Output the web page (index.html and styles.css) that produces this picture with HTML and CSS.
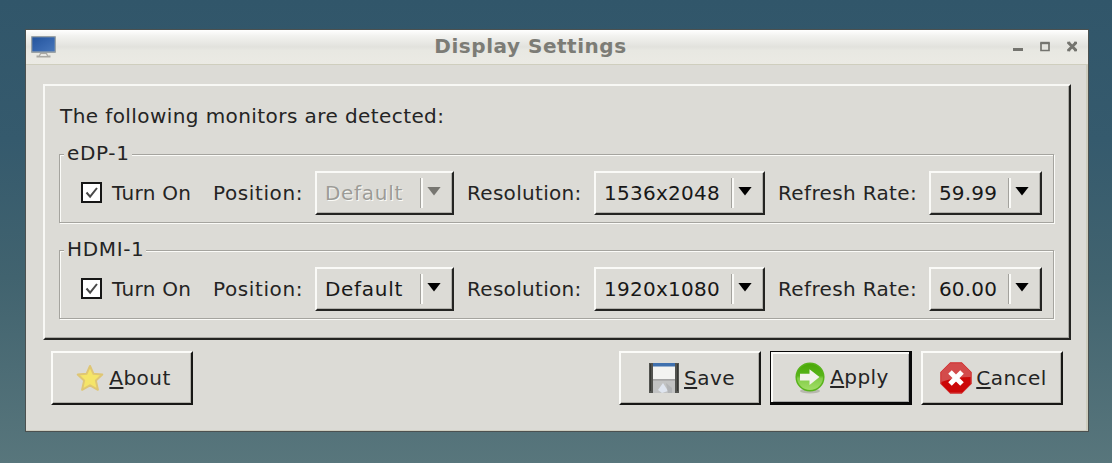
FILE: index.html
```html
<!DOCTYPE html>
<html lang="en">
<head>
<meta charset="utf-8">
<title>Display Settings</title>
<link rel="stylesheet" href="styles.css">
</head>
<body>
<main class="window">
  <header class="titlebar">
    <svg class="app-icon" width="27" height="24" viewBox="0 0 27 24">
      <defs><linearGradient id="screen" x1="0" y1="0" x2="1" y2="1"><stop offset="0" stop-color="#24549c"/><stop offset=".5" stop-color="#3565ad"/><stop offset="1" stop-color="#4776ba"/></linearGradient></defs>
      <rect x="1" y="1" width="25" height="17" rx="1" fill="#9ba3a6"/>
      <rect x="2.300" y="2.300" width="22.400" height="14.100" fill="url(#screen)"/>
      <path d="M10 18h7l1 2.500h2.500v2h-14v-2H9z" fill="#aaa9a4"/><path d="M11 19h5l1 2h-7z" fill="#e8e8e4"/>
    </svg>
    <h1 class="title">Display Settings</h1>
    <svg class="controls" width="68" height="14" viewBox="0 0 68 14" fill="none" stroke="#74746f">
      <path d="M1 9.500h10" stroke-width="3"/>
      <path d="M29 3v7.500h8V3" stroke-width="1.700"/><path d="M28.200 3h9.600" stroke-width="2.400"/>
      <path d="M56.200 2.500l8 8M64.200 2.500l-8 8" stroke-width="3"/><path d="M55.200 2.700h3M62 2.700h3M55.200 10.300h3M62 10.300h3" stroke-width="1.800"/>
    </svg>
  </header>
  <section class="panel">
    <p class="intro">The following monitors are detected:</p>
    <div class="monitor">
      <span class="legend">eDP-1</span>
      <span class="check"><svg width="17" height="17" viewBox="0 0 17 17"><path d="M3.500 8.500l3.600 4.200L14 4" fill="none" stroke="#484848" stroke-width="2"/></svg></span>
      <span class="label turn">Turn On</span>
      <span class="label position">Position:</span>
      <span class="combo combo-pos disabled"><span class="value">Default</span><i class="sep"></i><i class="arrow"></i></span>
      <span class="label resolution">Resolution:</span>
      <span class="combo combo-res"><span class="value">1536x2048</span><i class="sep"></i><i class="arrow"></i></span>
      <span class="label refresh">Refresh Rate:</span>
      <span class="combo combo-rate"><span class="value">59.99</span><i class="sep"></i><i class="arrow"></i></span>
    </div>
    <div class="monitor">
      <span class="legend">HDMI-1</span>
      <span class="check"><svg width="17" height="17" viewBox="0 0 17 17"><path d="M3.500 8.500l3.600 4.200L14 4" fill="none" stroke="#484848" stroke-width="2"/></svg></span>
      <span class="label turn">Turn On</span>
      <span class="label position">Position:</span>
      <span class="combo combo-pos"><span class="value">Default</span><i class="sep"></i><i class="arrow"></i></span>
      <span class="label resolution">Resolution:</span>
      <span class="combo combo-res"><span class="value">1920x1080</span><i class="sep"></i><i class="arrow"></i></span>
      <span class="label refresh">Refresh Rate:</span>
      <span class="combo combo-rate"><span class="value">60.00</span><i class="sep"></i><i class="arrow"></i></span>
    </div>
  </section>
  <footer class="actions">
    <div class="button about">
      <svg width="28" height="28" viewBox="0 0 28 28"><path d="M14 2l3.500 7.800 8.800.8-6.400 6 2 9.200L14 21.300l-7.900 4.500 2-9.200-6.400-6 8.800-.8z" fill="#f5e568" stroke="#dfc674" stroke-width="2" stroke-linejoin="round"/></svg>
      <span><u>A</u>bout</span>
    </div>
    <div class="button save">
      <svg width="32" height="32" viewBox="0 0 32 32">
        <path d="M1 1h30v30h-4l-1-1H6l-1 1H1z" fill="#52534f"/><path d="M2.500 2v27M29.500 2v27" stroke="#363733"/>
        <path d="M5 1h22v4H5z" fill="#3f70ae"/><path d="M5 4.500h22v13H5z" fill="#f3f3f1"/>
        <path d="M5 17.500h22V31H5z" fill="#c2c3c3"/><path d="M5 18h22" stroke="#999"/>
        <path d="M15 21l5 8-6 2-4-3z" fill="#dfe5ef"/><path d="M18 21l6 5v5h-4z" fill="#b2b4b6"/>
      </svg>
      <span><u>S</u>ave</span>
    </div>
    <div class="button apply">
      <svg width="32" height="34" viewBox="0 0 32 34">
        <defs><linearGradient id="green" x2="0" y2="1"><stop offset="0" stop-color="#4aa706"/><stop offset=".45" stop-color="#58b51a"/><stop offset=".55" stop-color="#83cc48"/><stop offset="1" stop-color="#a4df68"/></linearGradient></defs>
        <ellipse cx="16" cy="31" rx="10" ry="2.500" fill="#b7b8ae"/>
        <circle cx="16" cy="17" r="13.800" fill="url(#green)" stroke="#58b31b" stroke-width="1.500"/>
        <path d="M6 13.800h9.500V9.300L25.500 17l-10 8v-4.600H6z" fill="#f2f2ec"/>
      </svg>
      <span><u>A</u>pply</span>
    </div>
    <div class="button cancel">
      <svg width="32" height="32" viewBox="0 0 32 32">
        <path d="M10 .5h12l9.500 9.500v12L22 31.500H10L.5 22V10z" fill="#cc0808"/>
        <path d="M10 1h12l9 9v5Q16 15 1 20V10z" fill="#d34b4b"/>
        <path d="M10 1h12l9 9v12l-9 9H10l-9-9V10z" fill="none" stroke="#d23b3b"/>
        <path d="M10 10l12 12M22 10L10 22" stroke="#fff" stroke-width="5"/>
      </svg>
      <span><u>C</u>ancel</span>
    </div>
  </footer>
</main>
</body>
</html>
```
FILE: styles.css
```css
* { box-sizing: border-box; }
body {
  margin: 0;
  height: 463px;
  padding: 29px 23px 30px 25px;
  overflow: hidden;
  background: linear-gradient(#31566a, #355a6d 30%, #41636f 60%, #58767c);
  color: #242424;
  font: 20px/24px "DejaVu Sans", sans-serif;
}
.window {
  width: 1064px;
  height: 403px;
  border: 1px solid #4b5150;
  background: #dcdbd6;
  box-shadow: inset -2px -1px #cecdbf;
}
.titlebar {
  display: flex;
  align-items: center;
  height: 35px;
  padding: 0 8px 0 4px;
  background: linear-gradient(#fff, #f2f2ef 18%, #e2e2dd 50%, #e8e8e2 60%, #ebeae4);
  border-bottom: 1px solid #cfcebe;
}
.title {
  flex: 1;
  margin: 0;
  padding: 0 8px 3px 0;
  color: #7c7c76;
  font-size: 20px;
  line-height: 24px;
  letter-spacing: .53px;
  text-align: center;
}
.panel {
  width: 1028px;
  height: 256px;
  margin: 19px 0 0 17px;
  padding: 18px 15px 0 14px;
  border: 2px solid;
  border-color: #f8f8f5 #242422 #242422 #f8f8f5;
  box-shadow: inset -1px -1px #aaa9a4;
}
.intro { margin: 0 0 26px 1px; letter-spacing: .42px; }
.monitor {
  position: relative;
  display: flex;
  align-items: center;
  height: 69px;
  margin-bottom: 27px;
  padding: 8px 0 0 21px;
  border: 1px solid #a5a49f;
  box-shadow: 1px 1px #fbfbf8, inset 1px 1px #fbfbf8;
}
.legend {
  position: absolute;
  top: -14px;
  left: 4px;
  padding: 0 2px 0 3px;
  background: #dcdbd6;
  letter-spacing: .65px;
  white-space: nowrap;
}
.check {
  display: flex;
  width: 21px;
  height: 21px;
  margin-right: 10px;
  border: 2px solid #161616;
  background: #fff;
}
.label { white-space: nowrap; }
.turn { width: 101px; letter-spacing: .3px; }
.position { width: 102px; letter-spacing: .6px; }
.resolution { width: 127px; letter-spacing: .3px; }
.refresh { width: 151px; letter-spacing: .35px; }
.combo {
  display: flex;
  align-items: center;
  height: 44px;
  padding: 0 11px 0 8px;
  border: 2px solid;
  border-color: #fafaf7 #242422 #242422 #fafaf7;
  box-shadow: inset -1px -1px #b2b1ac;
  color: #181818;
}
.combo-pos { width: 139px; margin-right: 13px; letter-spacing: .7px; }
.combo-res { width: 171px; margin-right: 13px; letter-spacing: .25px; }
.combo-rate { width: 113px; letter-spacing: .15px; }
.value { flex: 1; }
.sep {
  width: 3px;
  height: 30px;
  margin-right: 4px;
  border-left: 1px solid #a3a29d;
  border-right: 2px solid #fafaf7;
}
.arrow {
  width: 14px;
  height: 9px;
  margin-top: -3px;
  background: #000;
  clip-path: polygon(0 0, 100% 0, 50% 100%);
}
.disabled { color: #9c9b96; text-shadow: 1px 1px #fafaf7; }
.disabled .arrow { background: #777671; }
.actions {
  display: flex;
  gap: 9px;
  padding: 11px 25px 0 25px;
}
.button {
  display: flex;
  align-items: center;
  justify-content: center;
  gap: 4px;
  width: 142px;
  height: 54px;
  padding-left: 3px;
  border: 2px solid;
  border-color: #fbfbf8 #171715 #171715 #fbfbf8;
  box-shadow: inset -1px -1px #b1b0aa;
  letter-spacing: .45px;
}
.button u { text-decoration-thickness: 2px; text-underline-offset: 2px; text-decoration-skip-ink: none; }
.about { margin-right: auto; gap: 5px; }
.apply {
  border: 2px solid #080808;
  border-width: 1px 3px 3px 1px;
  box-shadow: inset 2px 2px #fbfbf8, inset -1px -1px #aaa;
}
```
